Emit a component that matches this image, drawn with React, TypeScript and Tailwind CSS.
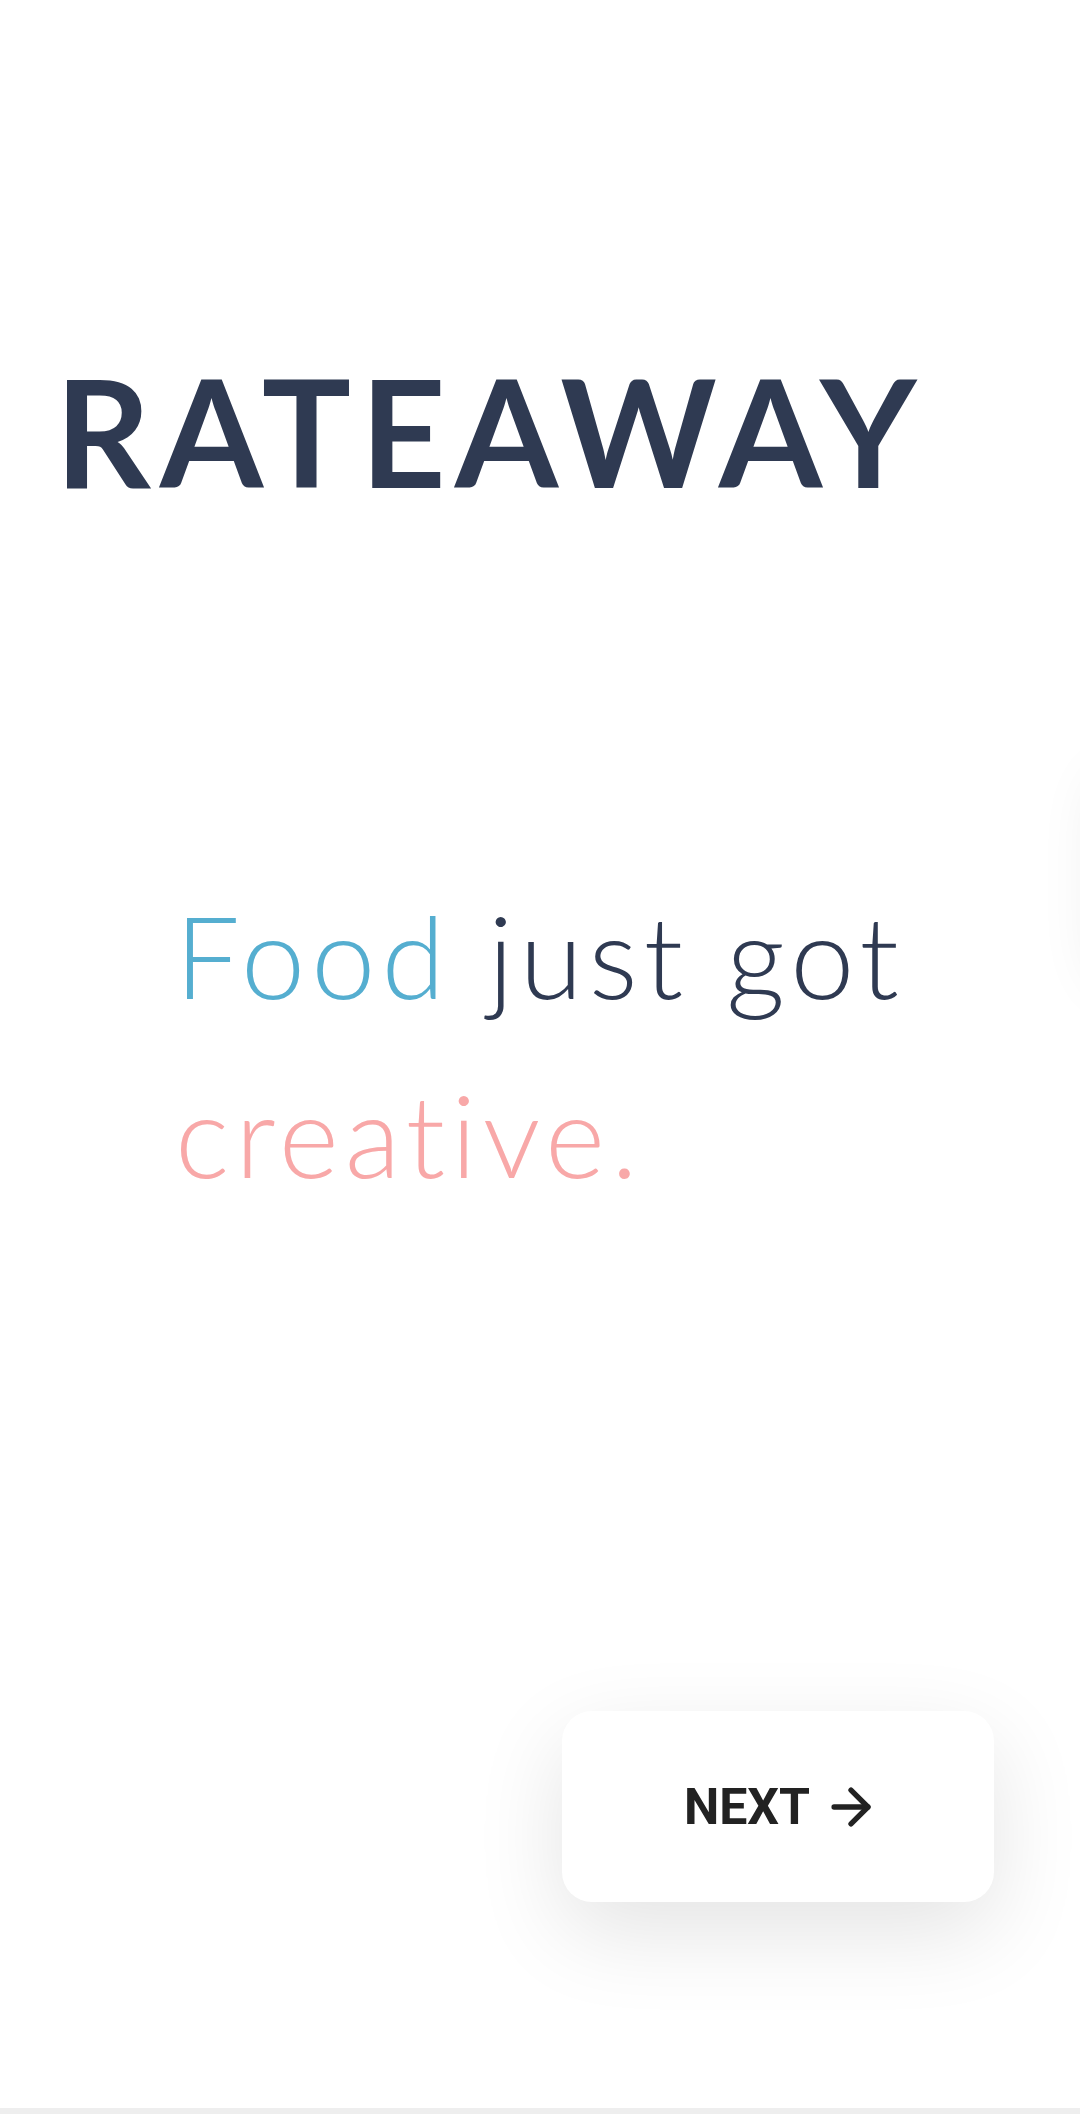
import React from "react";
import { ArrowRight } from "lucide-react";

export default function App() {
  return (
    <div className="relative w-[1080px] h-[2114px] overflow-hidden bg-white">
      {/* card peeking from the right edge */}
      <div className="absolute left-[1096px] top-[770px] w-[300px] h-[220px] rounded-[40px] bg-white shadow-[0_0_60px_rgba(0,0,0,0.08)]" />
      <div className="flex flex-col h-full">
        <div className="pt-[356px] pl-[55px]">
          <h1
            className="text-[149px] leading-none font-bold tracking-[9px] text-[#2f3a52]"
            style={{ fontFamily: "Lato, 'Open Sans', sans-serif" }}
          >
            RATEAWAY
          </h1>
        </div>
        <div
          className="pt-[360px] pl-[175px] font-light text-[115px] leading-[179px] tracking-[6px]"
          style={{ fontFamily: "Lato, 'Noto Sans', sans-serif" }}
        >
          <div>
            <span className="text-[#55aed0]">Food</span>{" "}
            <span className="text-[#2f3a52]">just got</span>
          </div>
          <div className="text-[#f8a8a8]">creative.</div>
        </div>
        <div className="flex justify-end pr-[86px] mt-auto mb-[206px]">
          <button className="w-[432px] h-[191px] pl-[8px] rounded-[30px] bg-white shadow-[0_30px_90px_rgba(0,0,0,0.11)] flex items-center justify-center gap-[12px]">
            <span
              className="text-[50px] font-bold text-[#222222] leading-none"
              style={{ fontFamily: "Roboto, sans-serif" }}
            >
              NEXT
            </span>
            <ArrowRight className="w-[58px] h-[58px] text-[#222222]" strokeWidth={2.2} />
          </button>
        </div>
        <div className="h-[6px] bg-[#eeeeee]" />
      </div>
    </div>
  );
}
